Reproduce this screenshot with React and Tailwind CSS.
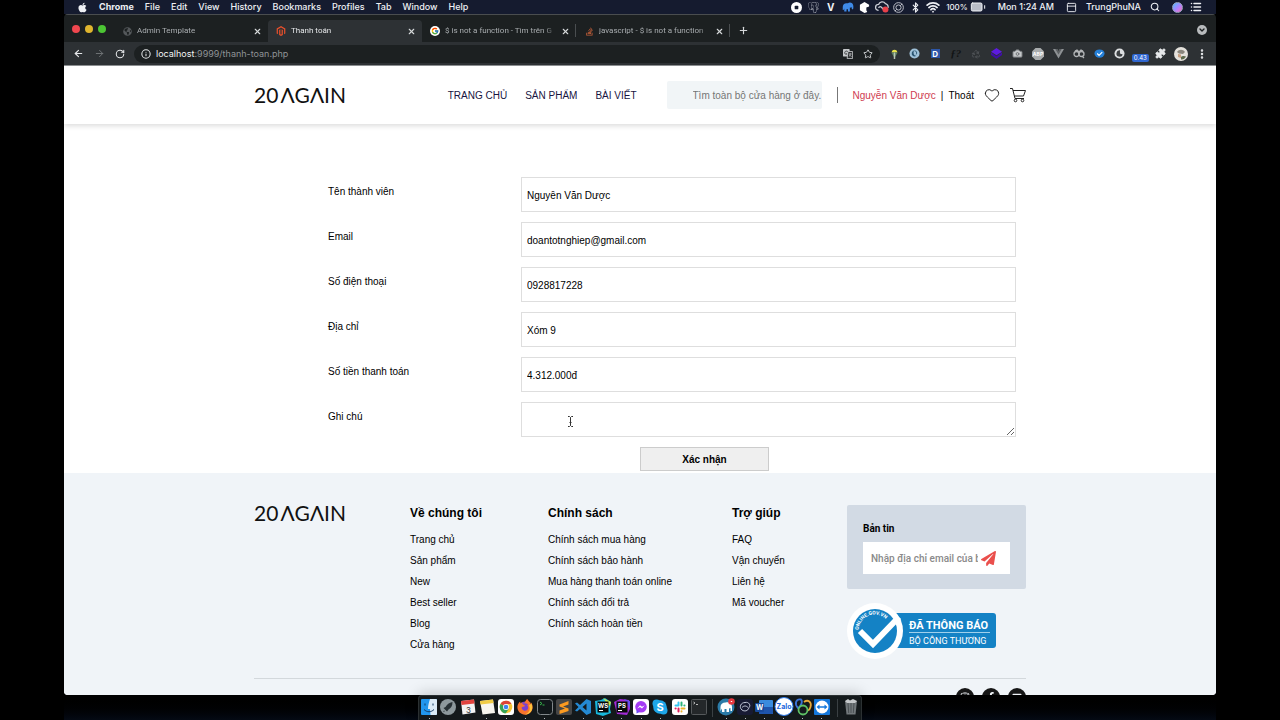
import {
  ArrowLeft,
  ArrowRight,
  Battery,
  Bluetooth,
  Camera,
  ChevronDown,
  EllipsisVertical,
  Heart,
  Info,
  List,
  PanelTop,
  Plus,
  Puzzle,
  Recycle,
  RotateCw,
  Search,
  Star,
  Wifi,
  X,
} from 'lucide-react';
import {
  FaApple,
  FaFacebookF,
  FaFirefoxBrowser,
  FaGlobeAmericas,
  FaInstagram,
  FaMagento,
  FaPaperPlane,
  FaStackOverflow,
  FaYoutube,
} from 'react-icons/fa';
import { FcGoogle } from 'react-icons/fc';
import { SiPostgresql } from 'react-icons/si';

const menus = ['File', 'Edit', 'View', 'History', 'Bookmarks', 'Profiles', 'Tab', 'Window', 'Help'];

const tabs = [
  { title: 'Admin Template', icon: <FaGlobeAmericas className="size-[9px] text-[#54585b]" /> },
  { title: 'Thanh toán', icon: <FaMagento className="size-[10px] text-[#e8502c]" />, active: true },
  {
    title: '$ is not a function - Tìm trên G',
    icon: (
      <span className="flex size-[10px] items-center justify-center rounded-full bg-white">
        <FcGoogle className="size-2" />
      </span>
    ),
    divider: true,
  },
  {
    title: 'javascript - $ is not a function',
    icon: <FaStackOverflow className="size-[9px] text-[#c8613a]" />,
    divider: true,
  },
];

const fields = [
  { id: 'name', label: 'Tên thành viên', value: 'Nguyễn Văn Dược' },
  { id: 'email', label: 'Email', value: 'doantotnghiep@gmail.com', type: 'email' },
  { id: 'phone', label: 'Số điện thoại', value: '0928817228', type: 'tel' },
  { id: 'address', label: 'Địa chỉ', value: 'Xóm 9' },
  { id: 'total', label: 'Số tiền thanh toán', value: '4.312.000đ' },
];

const footerColumns = [
  { title: 'Về chúng tôi', links: ['Trang chủ', 'Sản phẩm', 'New', 'Best seller', 'Blog', 'Cửa hàng'] },
  {
    title: 'Chính sách',
    links: [
      'Chính sách mua hàng',
      'Chính sách bảo hành',
      'Mua hàng thanh toán online',
      'Chính sách đổi trả',
      'Chính sách hoàn tiền',
    ],
  },
  { title: 'Trợ giúp', links: ['FAQ', 'Vận chuyển', 'Liên hệ', 'Mã voucher'] },
];

/* ---------- macOS menu bar ---------- */

function Elephant({ className }) {
  return (
    <svg viewBox="0 0 16 16" className={className} fill="currentColor">
      <path d="M1 8c0-3 2-5 5-5h2c1-1.500 4-1.500 5.500 0C15 4.500 15.500 7 15 10c-.2 1.500-1.800 1.500-2 0l-.3-2c-.7 1-1.500 1-2.200.8V14H8v-3H6v3H3v-4l-1 2H1z" />
    </svg>
  );
}

function MenuBar() {
  return (
    <div className="flex h-[14px] shrink-0 items-center justify-between bg-[#151b2f] pr-[14px] pl-[13px] text-[9px] font-medium text-[#eef0f4]">
      <div className="flex items-center gap-[11px]">
        <FaApple className="size-[11px]" />
        <span className="font-bold">Chrome</span>
        {menus.map((m) => (
          <span key={m}>{m}</span>
        ))}
      </div>
      <div className="flex items-center">
        <div className="mr-[5px] grid grid-cols-[repeat(9,17px)] place-items-center">
          <svg viewBox="0 0 12 12" className="size-[11px]">
            <circle cx="6" cy="6" r="6" fill="#fff" />
            <rect x="4" y="4" width="4" height="4" rx="1" fill="#151b2f" />
          </svg>
          <SiPostgresql className="size-[11px] text-[#b9bdc7]" />
          <span className="text-[10px] font-bold">V</span>
          <Elephant className="size-3 text-[#3f8ae8]" />
          <svg viewBox="0 0 12 12" className="size-[11px]">
            <path d="M6 0l5 3v2L8 6v3l1 2-3 1-5-3V3z" fill="#fff" />
          </svg>
          <svg viewBox="0 0 16 14" className="h-[12px] w-[14px]" fill="none" stroke="#c9ccd4" strokeWidth="1.500">
            <path d="M4 11a3.500 3.500 0 010-7 4.500 4.500 0 018-1 4 4 0 013 5M4 8a2 2 0 013-1l3 3" />
            <circle cx="12" cy="10" r="3.500" fill="#e8414a" stroke="none" />
          </svg>
          <svg viewBox="0 0 12 12" className="size-[11px]" fill="none" stroke="#c9ccd4">
            <circle cx="6" cy="6" r="5.300" />
            <circle cx="6" cy="6" r="2.800" />
            <path d="M2 10l2-2M8 4l2-2" />
          </svg>
          <Bluetooth className="size-[11px]" strokeWidth={2.5} />
          <Wifi className="size-[14px]" strokeWidth={3} />
        </div>
        <span className="text-[8px]">100%</span>
        <Battery className="ml-[2px] size-4 fill-[#b9bdc7]" strokeWidth={1.5} />
        <span className="ml-3">Mon 1:24 AM</span>
        <PanelTop className="ml-3 size-[11px]" />
        <span className="ml-[9px]">TrungPhuNA</span>
        <Search className="ml-[9px] size-[10px]" strokeWidth={2.5} />
        <span className="ml-3 size-[11px] rounded-full border border-[#9aa3c0] bg-linear-to-br from-sky-400 via-violet-400 to-pink-400" />
        <List className="ml-[7px] size-3" strokeWidth={3} />
      </div>
    </div>
  );
}

/* ---------- Chrome window ---------- */

function TabStrip() {
  return (
    <div className="flex h-7 shrink-0 items-end border-t border-[#4a4d4f] bg-[#1c2021] font-[Roboto,sans-serif] text-[8px]">
      <div className="flex w-[50px] items-center gap-[5px] self-center pl-2">
        <span className="size-2 rounded-full bg-[#f0474f]" />
        <span className="size-2 rounded-full bg-[#dfb52e]" />
        <span className="size-2 rounded-full bg-[#4cc534]" />
      </div>
      {tabs.map((tab) => (
        <div
          key={tab.title}
          className={`relative flex h-[22px] w-[154px] items-center gap-[5px] rounded-t pr-[6px] pl-2 ${
            tab.active ? 'bg-[#2d3134] text-[#e4e6e8]' : 'text-[#a9adb0]'
          }`}
        >
          <span className="flex w-[10px] shrink-0 justify-center">{tab.icon}</span>
          <span className="min-w-0 flex-1 overflow-hidden mask-r-from-90% whitespace-nowrap">{tab.title}</span>
          <button aria-label="Close tab">
            <X className="size-[9px] text-[#d5d8da]" strokeWidth={3} />
          </button>
          {tab.divider && <span className="absolute top-1 right-0 h-[13px] w-px bg-[#4a4e50]" />}
        </div>
      ))}
      <button aria-label="New tab" className="ml-2 self-center text-[#d5d8da]">
        <Plus className="mt-[3px] size-[11px]" strokeWidth={2.5} />
      </button>
      <button
        aria-label="Search tabs"
        className="mt-[3px] mr-[9px] ml-auto flex size-[10px] items-center justify-center self-center rounded-full bg-[#b8bbbd] text-[#1c2021]"
      >
        <ChevronDown className="size-2" strokeWidth={4} />
      </button>
    </div>
  );
}

function Extensions() {
  return (
    <div className="grid w-[328px] shrink-0 grid-cols-16 place-items-center">
      <svg viewBox="0 0 12 12" className="size-[11px]">
        <path d="M3 5a3 3 0 016 0z" fill="#e6e04a" />
        <path d="M2.500 5h7L6 11z" fill="#5c8064" />
        <path d="M5.200 5h1.600v7H5.200z" fill="#b9c4b4" />
      </svg>
      <svg viewBox="0 0 12 12" className="size-[11px]">
        <circle cx="6" cy="6" r="5.500" fill="#9fc1d8" />
        <path d="M6 2.500a3.500 3.500 0 00-2 6c1 1 3 1 4 0-2 0-3-1.500-3-3s0-2 1-3z" fill="#2a5470" />
        <path d="M6 3c2 0 3 2 2 4" fill="none" stroke="#2a5470" />
      </svg>
      <span className="flex size-[9px] items-center justify-center bg-[#2d56a8] text-[8px] font-bold text-white">D</span>
      <span className="font-['Liberation_Serif',serif] text-[11px] leading-none font-bold text-[#121415] italic">ƒ?</span>
      <Recycle className="size-[10px] text-[#54585b]" />
      <svg viewBox="0 0 12 12" className="size-[11px]">
        <path d="M6 0l6 4-6 4-6-4z" fill="#5d1be0" />
        <path d="M0 5l6 4 6-4v2.500L6 12 0 7.500z" fill="#3f0fa8" />
      </svg>
      <Camera className="size-[11px] fill-[#c5c8ca] text-[#6b6f72]" />
      <svg viewBox="0 0 12 12" className="size-[12px]">
        <path d="M3.500 0h5L12 3.500v5L8.500 12h-5L0 8.500v-5z" fill="#a9acae" />
        <text x="6" y="8" fontSize="5" fontWeight="700" textAnchor="middle" fill="#fff">
          ABP
        </text>
      </svg>
      <svg viewBox="0 0 12 12" className="size-[11px]">
        <path d="M0 1h4.500L6 3.500 7.500 1H12L6 11.500z" fill="#8d9194" />
        <path d="M2.500 1h2L6 3.500 7.500 1h2L6 7.200z" fill="#5c6063" />
      </svg>
      <svg viewBox="0 0 12 12" className="size-[12px]" fill="none" stroke="#b0b3b5" strokeWidth="1.300">
        <circle cx="3.500" cy="6" r="2.500" />
        <circle cx="8.500" cy="6" r="2.500" />
        <path d="M2 3l2-1 2 2 2-2 2 1M9 8l2 2" />
      </svg>
      <svg viewBox="0 0 12 12" className="size-[11px]">
        <ellipse cx="6" cy="6" rx="5.500" ry="4.500" fill="#2580d8" />
        <path d="M3.500 6l2 2L9 4.500" fill="none" stroke="#fff" strokeWidth="1.300" />
      </svg>
      <svg viewBox="0 0 12 12" className="size-[11px]">
        <circle cx="6" cy="6" r="5.500" fill="#dcdee0" />
        <path d="M6.500 2.500a3.500 3.500 0 103 4.500L6.500 6z" fill="#3b3f42" />
      </svg>
      <span className="mt-[9px] rounded-xs bg-[#2f66d0] px-[2px] text-[6px] leading-2 text-white">0.43</span>
      <Puzzle className="size-[11px] fill-[#e6e8ea] text-[#e6e8ea]" />
      <svg viewBox="0 0 14 14" className="size-[14px]">
        <circle cx="7" cy="7" r="7" fill="#e4e1dc" />
        <path d="M3 5c2-3 6-3 8 0L9 7l-4-.5z" fill="#8a857c" />
        <path d="M7 10c1-1 3-1.500 5-.5-1 2-3 3.500-5 3z" fill="#5e6a4c" />
        <path d="M4 7l3 .5V11l-3-1z" fill="#c79f80" />
      </svg>
      <EllipsisVertical className="size-[12px] text-[#e6e8ea]" strokeWidth={3} />
    </div>
  );
}

function Toolbar() {
  return (
    <div className="flex h-6 shrink-0 items-center border-b border-[#8b8e90] bg-[#2d3134] pr-1 pl-[9px] text-[#e6e8ea]">
      <button aria-label="Back">
        <ArrowLeft className="size-[11px]" strokeWidth={2.5} />
      </button>
      <button aria-label="Forward" className="ml-[10px] text-[#73777a]">
        <ArrowRight className="size-[11px]" />
      </button>
      <button aria-label="Reload" className="ml-[10px]">
        <RotateCw className="size-[10px]" strokeWidth={2.5} />
      </button>
      <div className="ml-[9px] flex h-[18px] flex-1 items-center rounded-full bg-[#1c2021] pr-[7px] pl-[7px]">
        <Info className="size-[10px]" strokeWidth={2.5} />
        <p className="ml-[5px] flex-1 text-[9px] text-[#8f9396]">
          <span className="text-[#f1f3f4]">localhost</span>:9999/thanh-toan.php
        </p>
        <svg viewBox="0 0 12 12" className="mr-[10px] size-[10px]">
          <rect x="0" y="0" width="8" height="9" rx="1" fill="#c5c8ca" />
          <path d="M6 3h5.500v8.500H5z" fill="#2a2d2f" stroke="#c5c8ca" />
          <path d="M5.800 3.500A2 2 0 104 6.500V5" fill="none" stroke="#2a2d2f" />
          <path d="M7 6h3.500M8.700 5v1L7.500 9M8 7l2.300 2.500" fill="none" stroke="#c5c8ca" strokeWidth=".8" />
        </svg>
        <Star className="size-[10px]" />
      </div>
      <div className="ml-1">
        <Extensions />
      </div>
    </div>
  );
}

/* ---------- Shop page ---------- */

function Logo() {
  return (
    <a
      href="#home"
      aria-label="20AGAIN"
      className="flex h-4 items-center gap-[2px] font-['Lato',sans-serif] text-[21px] leading-4 whitespace-nowrap text-[#111]"
    >
      <span>20</span>
      <span>ΛGΛIN</span>
    </a>
  );
}

function CartIcon() {
  return (
    <svg viewBox="0 0 16 16" className="size-4" fill="none" stroke="#222">
      <path d="M0 1.500h2.500l2.500 10h9M3 3.500h12.500l-2 5.500H4.500" />
      <circle cx="5.500" cy="13.500" r="1.300" />
      <circle cx="12.500" cy="13.500" r="1.300" />
    </svg>
  );
}

function Header() {
  return (
    <header className="relative shrink-0 bg-white shadow-[0_2px_5px_rgba(0,0,0,0.14)]">
      <div className="mx-auto flex h-[58px] max-w-[772px] items-center">
        <Logo />
        <nav className="ml-auto flex gap-[18px] text-[#17153f]">
          <a href="#home">TRANG CHỦ</a>
          <a href="#products">SẢN PHẨM</a>
          <a href="#posts">BÀI VIẾT</a>
        </nav>
        <input
          type="text"
          aria-label="Tìm kiếm"
          placeholder="Tìm toàn bộ cửa hàng ở đây."
          className="ml-[30px] h-7 w-[155px] rounded-xs bg-[#f1f5f7] pl-[26px] placeholder:text-[#757575]"
        />
        <span className="ml-[15px] h-4 w-px bg-[#777]" />
        <a href="#account" className="ml-[15px] text-[#cf3c50]">
          Nguyễn Văn Dược
        </a>
        <span className="mx-[5px]">|</span>
        <a href="#logout">Thoát</a>
        <a href="#wishlist" aria-label="Yêu thích" className="ml-[10px]">
          <Heart className="size-4 text-[#222]" strokeWidth={1.5} />
        </a>
        <a href="#cart" aria-label="Giỏ hàng" className="ml-[10px]">
          <CartIcon />
        </a>
      </div>
    </header>
  );
}

function CheckoutForm() {
  return (
    <form className="mx-auto w-full max-w-[772px] pt-[53px] pr-[10px] pb-[2px] pl-[74px]" onSubmit={(e) => e.preventDefault()}>
      <div className="flex flex-col gap-[10px]">
        {fields.map((f) => (
          <div key={f.id} className="grid grid-cols-[193px_1fr]">
            <label htmlFor={f.id} className="pt-[7px]">
              {f.label}
            </label>
            <input
              id={f.id}
              type={f.type || 'text'}
              defaultValue={f.value}
              className="h-[35px] border border-[#dedede] px-[5px] pt-[2px]"
            />
          </div>
        ))}
        <div className="grid grid-cols-[193px_1fr]">
          <label htmlFor="note" className="pt-[7px]">
            Ghi chú
          </label>
          <div className="relative flex">
            <textarea id="note" className="h-[35px] w-full resize border border-[#dedede] px-[5px]" />
            {/* text cursor */}
            <svg viewBox="0 0 7 11" className="absolute top-[14px] left-[46px] h-[11px] w-[7px]" fill="none" stroke="#333">
              <path d="M1 .5h1.500l1 1 1-1H6M1 10.500h1.500l1-1 1 1H6M3.500 1.500v8M2.500 6.500h2" />
            </svg>
          </div>
        </div>
      </div>
      <div className="mt-[10px] flex justify-center pl-[65px]">
        <button type="submit" className="h-6 w-[129px] border border-[#ccc] bg-[#efefef] font-bold">
          Xác nhận
        </button>
      </div>
    </form>
  );
}

function TradeBadge() {
  return (
    <svg viewBox="0 0 150 56" className="mt-[14px] h-14 w-[150px]" role="img" aria-label="Đã thông báo Bộ Công Thương">
      <rect x="40" y="10" width="109" height="35" rx="3" fill="#1482c5" />
      <circle cx="28" cy="28" r="28" fill="#fff" />
      <circle cx="28" cy="28" r="22" fill="#1482c5" />
      <path d="M13 28l13 13L52 14" fill="none" stroke="#fff" strokeWidth="6" />
      <path id="badge-arc" d="M11.500 27a16 16 0 0131-5" fill="none" />
      <text fontSize="5" fontWeight="700" fill="#fff" className="font-[Roboto,sans-serif]">
        <textPath href="#badge-arc">ONLINE.GOV.VN</textPath>
      </text>
      <text x="62" y="26" fontSize="11" fontWeight="700" fill="#fff" className="font-[Roboto,sans-serif]">
        ĐÃ THÔNG BÁO
      </text>
      <path d="M62 29.500h81" stroke="#9fd0ec" />
      <text x="62" y="41" fontSize="9" fill="#fff" className="font-[Roboto,sans-serif]">
        BỘ CÔNG THƯƠNG
      </text>
    </svg>
  );
}

function Footer() {
  return (
    <footer className="flex-1 bg-[#f0f4f8]">
      <div className="mx-auto max-w-[772px] pt-8">
        <div className="grid grid-cols-[156px_138px_184px_115px_minmax(0,1fr)]">
          <Logo />
          {footerColumns.map((col) => (
            <div key={col.title}>
              <h3 className="text-[12px] leading-4 font-bold">{col.title}</h3>
              <ul className="mt-2 leading-[21px]">
                {col.links.map((link) => (
                  <li key={link}>
                    <a href="#footer">{link}</a>
                  </li>
                ))}
              </ul>
            </div>
          ))}
          <div>
            <div className="rounded-xs bg-[#d2dae4] px-4 pt-4 pb-[15px] font-[Roboto,sans-serif]">
              <label htmlFor="newsletter" className="block font-bold">
                Bản tin
              </label>
              <div className="mt-[6px] flex h-8 items-center bg-white pr-[14px] pl-2">
                <input
                  id="newsletter"
                  type="email"
                  placeholder="Nhập địa chỉ email của bạn"
                  className="min-w-0 flex-1 font-medium placeholder:text-[#8a8a8a]"
                />
                <button aria-label="Đăng ký" className="ml-[3px]">
                  <FaPaperPlane className="size-[15px] text-[#ea4f4c]" />
                </button>
              </div>
            </div>
            <TradeBadge />
          </div>
        </div>
        <div className="mt-[19px] flex justify-end gap-2 border-t border-[#d3d8dc] pt-[9px] text-[#f0f4f8]">
          <a href="#instagram" aria-label="Instagram" className="rounded-full bg-[#161616] p-1">
            <FaInstagram className="size-[10px]" />
          </a>
          <a href="#facebook" aria-label="Facebook" className="rounded-full bg-[#161616] p-1">
            <FaFacebookF className="size-[10px]" />
          </a>
          <a href="#youtube" aria-label="YouTube" className="rounded-full bg-[#161616] p-1">
            <FaYoutube className="size-[10px]" />
          </a>
        </div>
      </div>
    </footer>
  );
}

/* ---------- Dock ---------- */

function DockIcon({ label, running = true, children }) {
  return (
    <div className="relative flex size-4 items-center justify-center">
      <svg viewBox="0 0 16 16" className="size-4 overflow-visible" role="img" aria-label={label}>
        {children}
      </svg>
      {running && <span className="absolute -bottom-[4px] size-px bg-[#b8bcc0]" />}
    </div>
  );
}

function Dock() {
  return (
    <div className="flex h-[25px] shrink-0 justify-center bg-linear-to-b from-black to-[#040a14]">
      <div className="relative flex items-start rounded-t-sm border-x border-t border-[#2b3032] bg-[#14191b] pt-[3px] pr-[2px] pl-[2px] shadow-[0_-2px_14px_rgba(0,0,0,0.18)]">
        <div className="flex w-[286px] justify-between">
          <DockIcon label="Finder">
            <rect width="16" height="16" rx="1" fill="#2196ee" />
            <path d="M9 0h6a1 1 0 011 1v14a1 1 0 01-1 1H9.500L9 10H7c0-4 1-7 2-10z" fill="#dcecf8" />
            <path d="M4 4.500v2M12 4.500v2M3 10.500c3 3 7 3 10 0" stroke="#123a63" fill="none" />
          </DockIcon>
          <DockIcon label="Launchpad" running={false}>
            <circle cx="8" cy="8" r="8" fill="#8d989c" />
            <path d="M12.500 3C9 3.500 7 5.500 5.500 8L3.500 9l3.500 3.500 1.500-2C11 9 12.500 7 12.500 3zM4 11.500L3 13l2-.8z" fill="#273034" />
          </DockIcon>
          <DockIcon label="Calendar" running={false}>
            <path d="M1 2l13-1.500 1.500 13L2.500 15.500z" fill="#f3f3f3" />
            <path d="M1 2l13-1.500.5 4L1.500 6z" fill="#e2433e" />
            <text x="8.500" y="13.500" fontSize="8" textAnchor="middle" fill="#333">
              3
            </text>
          </DockIcon>
          <DockIcon label="Notes">
            <path d="M1 2l13-1.500 2 13.500L3.500 15.500z" fill="#f7f5ee" />
            <path d="M1 2l13-1.500.6 3.500L1.500 5.500z" fill="#f0cc45" />
          </DockIcon>
          <DockIcon label="Chrome">
            <rect width="16" height="16" rx="3" fill="#fff" />
            <circle cx="8" cy="8" r="6.300" fill="#f5c433" />
            <path d="M8 8L2.500 4.900A6.300 6.300 0 0113.500 4.900H8z" fill="#dc4437" />
            <path d="M8 8L2.500 4.900A6.300 6.300 0 007.800 14.300L11 9.500z" fill="#36a456" />
            <circle cx="8" cy="8" r="3" fill="#fff" />
            <circle cx="8" cy="8" r="2.300" fill="#3f83ee" />
          </DockIcon>
          <DockIcon label="Firefox">
            <circle cx="8" cy="8.500" r="6" fill="#7a3fd0" />
            <FaFirefoxBrowser size={16} color="#f9742c" />
            <path d="M14.500 4.500C17 11 13 15.500 8 15.500c4-1.500 6-5 4-9z" fill="#ffc23c" />
          </DockIcon>
          <DockIcon label="iTerm">
            <rect x=".5" y=".5" width="15" height="15" rx="3" fill="#11171a" stroke="#82888b" />
            <path d="M3 3l2 1.500L3 6M5.500 6h2" stroke="#37b74c" fill="none" />
          </DockIcon>
          <DockIcon label="Sublime Text">
            <rect width="16" height="16" rx="2" fill="#464646" />
            <path d="M3.500 5.500L12.500 2v3.500L7 7.500l5.500 2v2.500l-9 3v-3.500l5.500-2-5.500-2z" fill="#fb9a20" />
          </DockIcon>
          <DockIcon label="VS Code">
            <path d="M11.500 0L16 2v12l-4.500 2L5 10l-3 2.500-2-1L3.500 8 0 4.500l2-1L5 6zM11.500 4.500L7.500 8l4 3.500z" fill="#2489d2" fillRule="evenodd" />
          </DockIcon>
          <DockIcon label="WebStorm">
            <path d="M0 2l6-1 4-2 6 4-1 7 1 4-8 3-7-2z" fill="#18b8dc" />
            <path d="M8-1l8 4-1 4-4-4z" fill="#c6e84a" />
            <rect x="2.500" y="2.500" width="11" height="11" fill="#080808" />
            <text x="8" y="8.500" fontSize="6" fontWeight="700" textAnchor="middle" fill="#fff">
              WS
            </text>
            <path d="M4 11.500h4" stroke="#fff" />
          </DockIcon>
          <DockIcon label="PhpStorm">
            <path d="M0 3l6-3 9 1 1 9-3 6-10-1z" fill="#a32bd6" />
            <path d="M10 0l6 2v8z" fill="#6a4cf0" />
            <rect x="2.500" y="2.500" width="11" height="11" fill="#080808" />
            <text x="8" y="8.500" fontSize="6" fontWeight="700" textAnchor="middle" fill="#fff">
              PS
            </text>
            <path d="M4 11.500h4" stroke="#fff" />
          </DockIcon>
          <DockIcon label="Messenger">
            <rect width="16" height="16" rx="3" fill="#fff" />
            <circle cx="8" cy="7.800" r="5.800" fill="#a33af4" />
            <path d="M3.500 10.500v4l3-1.500z" fill="#6a4cf6" />
            <path d="M4.200 9.500L7 6.300l2 1.500 2.800-1.500L9 9.500 7 8z" fill="#fff" />
          </DockIcon>
          <DockIcon label="Skype">
            <circle cx="8" cy="8" r="6.800" fill="#1ea6e8" />
            <circle cx="4.500" cy="4.500" r="4" fill="#1ea6e8" />
            <circle cx="11.500" cy="11.500" r="4" fill="#1ea6e8" />
            <text x="8" y="12" fontSize="11" fontWeight="700" textAnchor="middle" fill="#fff">
              S
            </text>
          </DockIcon>
          <DockIcon label="Slack" running={false}>
            <rect width="16" height="16" rx="3" fill="#fff" />
            <g strokeWidth="2" strokeLinecap="round">
              <path d="M6.500 3.500v3M3.500 6.500h3" stroke="#36c5f0" />
              <path d="M9.500 3.500v3M12.500 6.500h-.2" stroke="#2eb67d" />
              <path d="M9.500 9.500h3M9.500 12.500v-.2" stroke="#ecb22e" />
              <path d="M6.500 9.500v3M3.500 9.500h.2" stroke="#e01e5a" />
            </g>
          </DockIcon>
          <DockIcon label="Terminal" running={false}>
            <rect x=".5" y=".5" width="15" height="15" rx="1" fill="#24282a" stroke="#55595b" />
            <path d="M2.500 3l1.500 1-1.500 1M5 5.500h2" stroke="#ddd" strokeWidth=".8" fill="none" />
          </DockIcon>
        </div>
        <span className="mx-[5px] h-[18px] w-px bg-[#3a4043]" />
        <div className="flex w-28 justify-between">
          <DockIcon label="TablePlus">
            <circle cx="8" cy="8" r="8.500" fill="#2b7ba8" />
            <path d="M2.500 8c0-3 2-4.500 5-4.500 3-1 6.500 0 6.500 4.500v4h-1.500V9l-1.500.5V13H8.500v-3h-2v3H4V9.500L2.500 12z" fill="#fff" />
            <circle cx="13.500" cy="2.500" r="3.300" fill="#e73840" />
            <path d="M12.800 2.500h1.400" stroke="#fff" />
          </DockIcon>
          <DockIcon label="Insomnia">
            <rect width="16" height="16" rx="3" fill="#171a33" />
            <path d="M8 3.500c4-1 6 3 4 5-1 4-5 4-7 2.500C1.500 8 4 3.500 8 3.500zM5 8.500c2-2 4-2 6 0" fill="none" stroke="#c4cadb" />
          </DockIcon>
          <DockIcon label="Word">
            <rect x="3" y="1" width="14" height="14" rx="1" fill="#3a8bde" />
            <path d="M3 8h14v6a1 1 0 01-1 1H3z" fill="#1e55ad" />
            <rect x="-1" y="4" width="9" height="9" rx="1" fill="#184a9c" />
            <text x="3.500" y="11" fontSize="7" fontWeight="700" textAnchor="middle" fill="#fff">
              W
            </text>
          </DockIcon>
          <DockIcon label="Zalo">
            <circle cx="8" cy="7.500" r="9" fill="#fff" stroke="#2d7cf0" />
            <text x="8" y="10" fontSize="7" fontWeight="700" textAnchor="middle" fill="#1968dc">
              Zalo
            </text>
          </DockIcon>
          <DockIcon label="Navicat">
            <g fill="none" strokeWidth="1.800">
              <path d="M3 9C-1 5 1-.5 6 .5c2 2 0 7-3 8.500z" stroke="#3a72d8" />
              <path d="M9 3c4-3 8 0 6.500 5-.5 2-1.500 3-2.500 3.500" stroke="#e8a838" />
              <circle cx="8" cy="11" r="4.500" stroke="#5fc266" />
            </g>
          </DockIcon>
          <DockIcon label="TeamViewer">
            <rect width="16" height="16" rx="1" fill="#1478dc" />
            <circle cx="8" cy="8" r="6.500" fill="#fff" />
            <path d="M2.500 8l3-2.500v1.700h5V5.500l3 2.500-3 2.500V8.800h-5v1.700z" fill="#1478dc" />
          </DockIcon>
        </div>
        <span className="mr-[5px] ml-[7px] h-[18px] w-px bg-[#3a4043]" />
        <DockIcon label="Trash" running={false}>
          <path d="M2 2h12l-1.500 13.500h-9z" fill="#72787b" />
          <path d="M5 4l.7 10M8 4v10M11 4l-.7 10" stroke="#4b5154" />
          <path d="M2 2l3-2 2 1.500L10 0l4 2-2 2H4z" fill="#c5c8ca" />
        </DockIcon>
      </div>
    </div>
  );
}

export default function App() {
  return (
    <div className="h-screen bg-black px-16 font-[Inter,sans-serif]">
      <div className="flex h-full flex-col overflow-hidden">
        <MenuBar />
        <div className="flex min-h-0 flex-1 flex-col overflow-hidden rounded-t rounded-b-sm">
          <TabStrip />
          <Toolbar />
          <main className="flex min-h-0 flex-1 flex-col overflow-hidden bg-white font-['Liberation_Sans',Arial,sans-serif] text-[10px] leading-[15px] text-black">
            <Header />
            <CheckoutForm />
            <Footer />
          </main>
        </div>
        <Dock />
      </div>
    </div>
  );
}
